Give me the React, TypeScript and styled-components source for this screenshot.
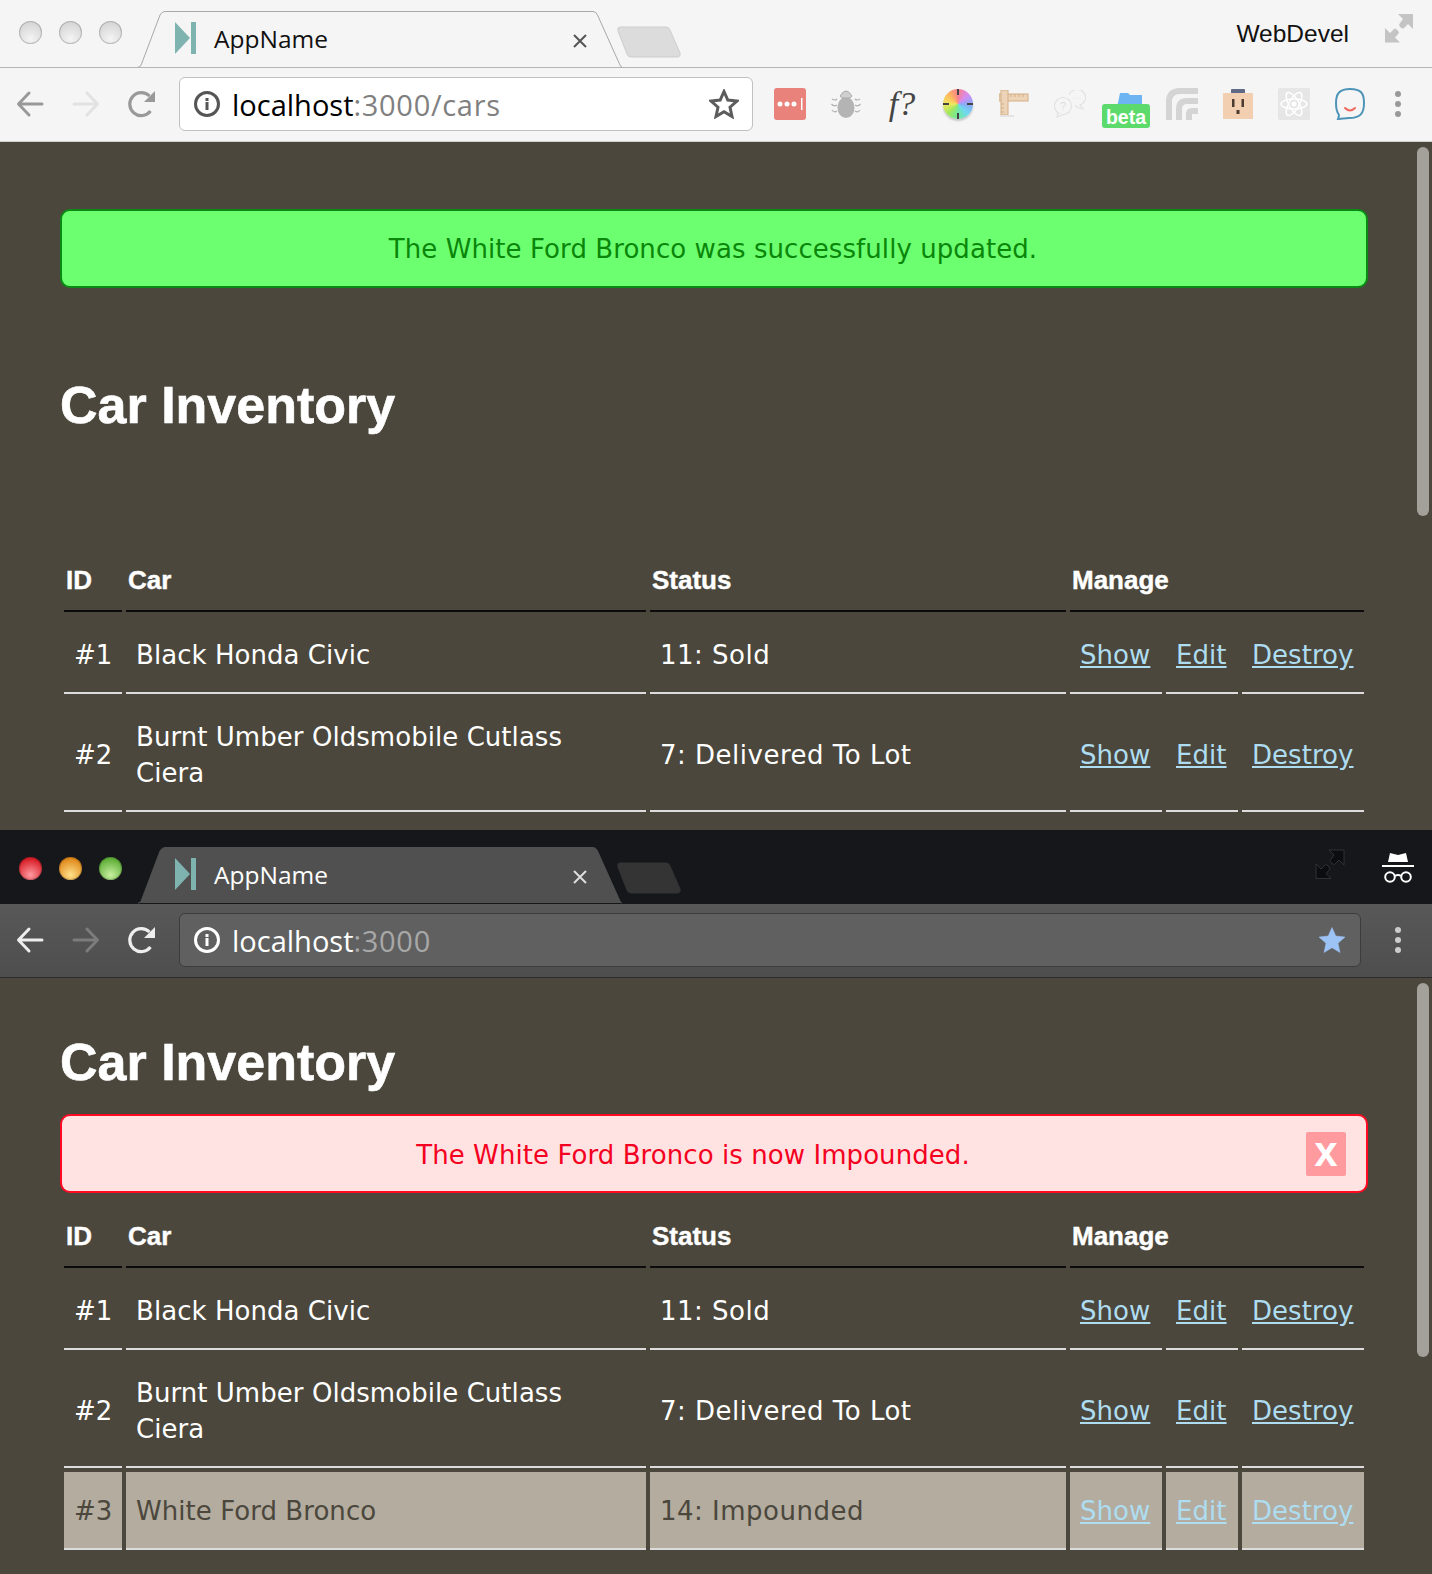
import React from "react";
import styled, { createGlobalStyle } from "styled-components";

const BODY_FONT = `"DejaVu Sans", Verdana, sans-serif`;
const CHROME_FONT = `"Open Sans", "DejaVu Sans", sans-serif`;
const HEAD_FONT = `"Liberation Sans", Arial, sans-serif`;

const Global = createGlobalStyle`
  html, body {
    margin: 0;
    padding: 0;
    background: #4b473c;
  }
  * {
    box-sizing: border-box;
  }
`;

const Page = styled.div`
  width: 1432px;
  height: 1574px;
  overflow: hidden;
`;

const Window = styled.section<{ $height: number }>`
  position: relative;
  height: ${(p) => p.$height}px;
  overflow: hidden;
  background: #4b473c;
`;

const Strip = styled.div<{ $dark?: boolean }>`
  display: flex;
  align-items: flex-end;
  height: ${(p) => (p.$dark ? 74 : 68)}px;
  background: ${(p) => (p.$dark ? "#15171a" : "#f5f5f5")};
  border-bottom: 1px solid ${(p) => (p.$dark ? "#15171a" : "#b4b4b4")};
`;

const Lights = styled.div`
  display: flex;
  gap: 17px;
  width: 138px;
  padding-left: 19px;
  margin-bottom: 23px;
`;

const Light = styled.span<{ $top: string; $bottom: string }>`
  width: 23px;
  height: 23px;
  border-radius: 50%;
  background: radial-gradient(
    circle at 50% 78%,
    ${(p) => p.$bottom} 0%,
    ${(p) => p.$top} 75%
  );
  box-shadow: inset 0 0 0 1px rgba(0, 0, 0, 0.18);
`;

const Tab = styled.div`
  position: relative;
  display: flex;
  align-items: center;
  width: 484px;
  height: 57px;
  margin-bottom: -1px;
  padding: 0 0 2px 37px;
`;

const TabShape = styled.svg`
  position: absolute;
  left: 0;
  top: 0;
`;

const Favicon = styled.svg`
  position: relative;
  flex: none;
  margin-bottom: 2px;
`;

const TabTitle = styled.span<{ $dark?: boolean }>`
  position: relative;
  margin-left: 18px;
  font: 24.5px ${CHROME_FONT};
  color: ${(p) => (p.$dark ? "#fff" : "#111")};
`;

const TabClose = styled.svg`
  position: absolute;
  left: 434px;
  top: 22px;
`;

const NewTab = styled.svg`
  margin: 0 0 9px -6px;
`;

const Profile = styled.span`
  margin-left: auto;
  margin-bottom: 19px;
  font: 24.5px ${HEAD_FONT};
  color: #111;
`;

const Resize = styled.svg<{ $first?: boolean }>`
  margin-left: ${(p) => (p.$first ? "auto" : "35px")};
  margin-bottom: 24px;
  margin-right: 18px;
`;

const Incognito = styled.svg`
  margin: 0 18px 20px 19px;
`;

const Toolbar = styled.div<{ $dark?: boolean }>`
  display: flex;
  align-items: center;
  height: 74px;
  padding-left: 2px;
  padding-bottom: 1px;
  background: ${(p) =>
    p.$dark ? "linear-gradient(#585858, #4e4e4e)" : "#f5f5f5"};
  border-bottom: 1px solid ${(p) => (p.$dark ? "#2c2c2c" : "#cfcfcf")};
`;

const NavButton = styled.button<{ $color: string }>`
  display: flex;
  align-items: center;
  justify-content: center;
  width: 56px;
  height: 40px;
  padding: 0;
  border: 0;
  background: none;
  color: ${(p) => p.$color};
`;

const UrlBar = styled.div<{ $dark?: boolean; $width: number }>`
  display: flex;
  align-items: center;
  width: ${(p) => p.$width}px;
  height: 54px;
  margin-left: 9px;
  padding: 0 13px 0 14px;
  border: 1px solid ${(p) => (p.$dark ? "#3c3c3c" : "#c0c0c0")};
  border-radius: 6px;
  background: ${(p) => (p.$dark ? "#606060" : "#fff")};
  color: ${(p) => (p.$dark ? "#fff" : "#555")};
`;

const UrlText = styled.span<{ $dark?: boolean }>`
  flex: 1;
  margin-left: 12px;
  font: 29px ${CHROME_FONT};
  color: ${(p) => (p.$dark ? "#fff" : "#000")};
`;

const UrlRest = styled.span<{ $dark?: boolean }>`
  letter-spacing: 0.7px;
  color: ${(p) => (p.$dark ? "#a8a8a8" : "#808080")};
`;

const Extensions = styled.div`
  display: flex;
  margin-left: 9px;
`;

const Extension = styled.div`
  position: relative;
  display: flex;
  align-items: center;
  justify-content: center;
  width: 56px;
  height: 40px;
`;

const FxGlyph = styled.span`
  font: italic 34px "Liberation Serif", serif;
  color: #444;
`;

const Wheel = styled.span`
  position: relative;
  width: 30px;
  height: 30px;
  border-radius: 50%;
  background: conic-gradient(
    #f8808c,
    #d88cf0,
    #8ca8f8,
    #70d8f0,
    #70e8a0,
    #a0e860,
    #f0e860,
    #ffb860,
    #f8808c
  );
  box-shadow: 0 2px 2px rgba(0, 0, 0, 0.2);
`;

const WheelCross = styled.svg`
  position: absolute;
  left: -1px;
  top: -1px;
`;

const Beta = styled.span`
  position: absolute;
  left: 4px;
  top: 20px;
  width: 48px;
  height: 24px;
  padding-top: 1px;
  border-radius: 3px;
  background: #5cdb6c;
  color: #fff;
  font: bold 19.5px/24px ${HEAD_FONT};
  text-align: center;
`;

const FolderIcon = styled.svg`
  position: absolute;
  left: 19px;
  top: 8px;
`;

const Menu = styled.div<{ $color: string }>`
  display: flex;
  flex-direction: column;
  align-items: center;
  gap: 4px;
  width: 40px;
  margin-left: auto;
  margin-right: 14px;
  span {
    width: 6px;
    height: 6px;
    border-radius: 50%;
    background: ${(p) => p.$color};
  }
`;

const Content = styled.main<{ $top: number }>`
  padding: ${(p) => p.$top}px 60px 0;
`;

const Heading = styled.h1<{ $after: number; $before?: number }>`
  margin: ${(p) => p.$before ?? 0}px 0 ${(p) => p.$after}px;
  font: bold 52px/60px ${HEAD_FONT};
  -webkit-text-stroke: 0.6px #fff;
  color: #fff;
`;

const Alert = styled.div<{ $tone: "good" | "bad" }>`
  display: flex;
  align-items: center;
  width: 1308px;
  height: 79px;
  padding: 0 20px 0 18px;
  border: 2px solid ${(p) => (p.$tone === "good" ? "#0a8a14" : "#ff0a22")};
  border-radius: 10px;
  background: ${(p) => (p.$tone === "good" ? "#6cff70" : "#ffe3e3")};
  color: ${(p) => (p.$tone === "good" ? "#0a860a" : "#f40020")};
  font: 26px ${BODY_FONT};
  letter-spacing: 0.07px;
`;

const AlertText = styled.span<{ $nudge?: boolean }>`
  flex: 1;
  padding-top: ${(p) => (p.$nudge ? 2 : 0)}px;
  text-align: center;
`;

const AlertClose = styled.button`
  width: 40px;
  height: 44px;
  padding: 0 0 6px;
  border: 0;
  border-radius: 2px;
  background: #ff9a9e;
  color: #fff;
  font: bold 42px/40px ${HEAD_FONT};
`;

const Table = styled.table`
  width: 1308px;
  margin-top: 16px;
  table-layout: fixed;
  border-collapse: separate;
  border-spacing: 4px;
  color: #fff;
`;

const HeadCell = styled.th`
  padding: 5px 2px 12px;
  border-bottom: 2px solid #0c0c0c;
  font: bold 26px/36px ${HEAD_FONT};
  -webkit-text-stroke: 0.4px #fff;
  text-align: left;
`;

const Cell = styled.td<{ $muted?: boolean; $center?: boolean; $wide?: boolean }>`
  padding: 21px 10px 19px;
  border-bottom: 2px solid #dcdcdc;
  background: ${(p) => (p.$muted ? "#b3ac9f" : "transparent")};
  color: ${(p) => (p.$muted ? "#4b473c" : "#fff")};
  font: 26px/36px ${BODY_FONT};
  letter-spacing: ${(p) => (p.$wide ? 0.5 : 0.05)}px;
  text-align: ${(p) => (p.$center ? "center" : "left")};
  white-space: normal;
`;

const ActionLink = styled.a`
  color: #aedcf0;
  text-decoration: underline;
`;

const Scrollbar = styled.div<{ $top: number; $height: number }>`
  position: absolute;
  right: 3px;
  top: ${(p) => p.$top}px;
  width: 12px;
  height: ${(p) => p.$height}px;
  border-radius: 6px;
  background: #a3a199;
`;

const COLUMNS = [58, 520, 416, 92, 72, 122];

const CARS = [
  { id: "#1", name: "Black Honda Civic", status: "11: Sold" },
  { id: "#2", name: "Burnt Umber Oldsmobile Cutlass Ciera", status: "7: Delivered To Lot" },
  { id: "#3", name: "White Ford Bronco", status: "14: Impounded", muted: true },
];

const Inventory = ({ rows }: { rows: typeof CARS }) => (
  <Table>
    <colgroup>
      {COLUMNS.map((w, i) => (
        <col key={i} width={w} />
      ))}
    </colgroup>
    <thead>
      <tr>
        <HeadCell>ID</HeadCell>
        <HeadCell>Car</HeadCell>
        <HeadCell>Status</HeadCell>
        <HeadCell colSpan={3}>Manage</HeadCell>
      </tr>
    </thead>
    <tbody>
      {rows.map((car) => (
        <tr key={car.id}>
          <Cell $muted={car.muted} $center>{car.id}</Cell>
          <Cell $muted={car.muted}>{car.name}</Cell>
          <Cell $muted={car.muted} $wide>{car.status}</Cell>
          <Cell $muted={car.muted}><ActionLink href="#show">Show</ActionLink></Cell>
          <Cell $muted={car.muted}><ActionLink href="#edit">Edit</ActionLink></Cell>
          <Cell $muted={car.muted}><ActionLink href="#destroy">Destroy</ActionLink></Cell>
        </tr>
      ))}
    </tbody>
  </Table>
);

const BrowserTab = ({ dark }: { dark?: boolean }) => (
  <Tab>
    <TabShape width="484" height="57" viewBox="0 0 484 57">
      <path
        d="M0 56 H1 Q2.500 56 3.500 53 L22 4 Q24 0.5 27 0.5 H455 Q458 0.5 459.500 4 L481.500 53 Q482.500 56 484 56"
        fill={dark ? "#505050" : "#f5f5f5"}
        stroke={dark ? "#505050" : "#a8a8a8"}
      />
    </TabShape>
    <Favicon width="21" height="32" viewBox="0 0 21 32">
      <path d="M0 0 L15 16 L0 32 Z" fill="#7fb3b0" />
      <rect x="16" y="0" width="5" height="32" fill="#7fb3b0" />
    </Favicon>
    <TabTitle $dark={dark}>AppName</TabTitle>
    <TabClose width="16" height="16" viewBox="0 0 16 16">
      <path
        d="M2 2 L14 14 M14 2 L2 14"
        stroke={dark ? "#ddd" : "#555"}
        strokeWidth="2"
      />
    </TabClose>
  </Tab>
);

const NewTabShape = ({ dark }: { dark?: boolean }) => (
  <NewTab width="66" height="32" viewBox="0 0 66 32">
    <path
      d="M4 1 H50 Q53 1 54 4 L64 27 Q65 31 61 31 H15 Q12 31 11 28 L2 5 Q1 1 4 1 Z"
      fill={dark ? "#343434" : "#dcdcdc"}
      stroke={dark ? "#343434" : "#cdcdcd"}
    />
  </NewTab>
);

const ResizeArrows = ({ dark, first }: { dark?: boolean; first?: boolean }) => (
  <Resize $first={first} width="30" height="30" viewBox="0 0 30 30">
    <path
      d="M14 1 H29 V16 L24 11 L19.500 15.500 Q16 15.500 15 11.500 L19 6 Z M1 15 V29.500 H16 L11 24.500 L15 20 Q14 16 10.500 15.500 L6 20 Z"
      fill={dark ? "#0c0d0f" : "#c4c4c4"}
      stroke={dark ? "#303236" : "none"}
      strokeWidth="1"
    />
  </Resize>
);

const BackIcon = () => (
  <svg width="28" height="28" viewBox="0 0 28 28" fill="none" stroke="currentColor" strokeWidth="3" strokeLinecap="round" strokeLinejoin="round">
    <path d="M26 14 H3 M13 3 L2.500 14 L13 25" />
  </svg>
);

const ForwardIcon = () => (
  <svg width="28" height="28" viewBox="0 0 28 28" fill="none" stroke="currentColor" strokeWidth="3" strokeLinecap="round" strokeLinejoin="round">
    <path d="M2 14 H25 M15 3 L25.500 14 L15 25" />
  </svg>
);

const ReloadIcon = () => (
  <svg width="28" height="28" viewBox="0 0 28 28" fill="none">
    <path d="M22.500 21 A11.500 11.500 0 1 1 21.500 6" stroke="currentColor" strokeWidth="3.200" />
    <path d="M27 1 V12 H16 Z" fill="currentColor" />
  </svg>
);

const InfoIcon = () => (
  <svg width="26" height="26" viewBox="0 0 26 26" fill="none" style={{ flex: "none" }}>
    <circle cx="13" cy="13" r="11.500" stroke="currentColor" strokeWidth="3" />
    <rect x="11.500" y="11" width="3" height="8" fill="currentColor" />
    <rect x="11.500" y="7" width="3" height="3" fill="currentColor" />
  </svg>
);

const StarIcon = ({ filled }: { filled?: boolean }) => (
  <svg width="30" height="30" viewBox="0 0 30 30" style={{ flex: "none" }}>
    <path
      d="M15 2.500 L18.800 11 L28 12 L21 18.200 L23 27.500 L15 22.700 L7 27.500 L9 18.200 L2 12 L11.200 11 Z"
      fill={filled ? "#9dc3f5" : "none"}
      stroke={filled ? "#9dc3f5" : "#5c5c5c"}
      strokeWidth={filled ? 0.5 : 3}
      strokeLinejoin="miter"
    />
  </svg>
);

const LastPassIcon = () => (
  <svg width="32" height="32" viewBox="0 0 32 32">
    <rect width="32" height="32" rx="3" fill="#e8827b" />
    <circle cx="6" cy="16" r="2.500" fill="#fff" />
    <circle cx="13" cy="16" r="2.500" fill="#fff" />
    <circle cx="20" cy="16" r="2.500" fill="#fff" />
    <rect x="27" y="10" width="1.500" height="12" fill="#fff" />
  </svg>
);

const BugIcon = () => (
  <svg width="30" height="30" viewBox="0 0 30 30" fill="none">
    <ellipse cx="15" cy="18.500" rx="8.500" ry="10.500" fill="#b4b4b4" />
    <path d="M9 7 Q15 -3 21 7 L19 9 H11 Z" fill="#cfcfcf" stroke="#aaa" />
    <path d="M6 10 Q4 12 1 10 M6 16 Q3 18 0.500 15 M6 22 Q3 24 1 21 M24 10 Q26 12 29 10 M24 16 Q27 18 29.500 15 M24 22 Q27 24 29 21" stroke="#b0b0b0" strokeWidth="1.200" />
  </svg>
);

const RulerIcon = () => (
  <svg width="30" height="28" viewBox="0 0 30 28">
    <rect x="0" y="4" width="29" height="7" fill="#edd4b8" stroke="#d4ae84" />
    <rect x="2" y="0" width="7" height="25" fill="#edd4b8" stroke="#d4ae84" />
    <path d="M12 4 V7 M16 4 V7 M20 4 V7 M24 4 V7 M2 14 H5 M2 18 H5 M2 22 H5" stroke="#d4ae84" />
    <rect x="1" y="25" width="14" height="2" fill="#e4e4e4" />
  </svg>
);

const ChatIcon = () => (
  <svg width="32" height="28" viewBox="0 0 32 28" fill="none" stroke="#e2e2e2" strokeWidth="1.200">
    <path d="M15 5 A8.500 8 0 1 1 26 15 L29 19 Q23 18 21 15" />
    <path d="M18 8 H18.800 M21 8 H21.800 M24 8 H24.800" />
    <circle cx="9" cy="16" r="8.500" fill="#f5f5f5" />
    <path d="M4 23 L3 27 L9 25" fill="#f5f5f5" />
    <text x="6" y="20" fontSize="11" fill="#ddd" stroke="none" fontFamily="Liberation Sans">?</text>
  </svg>
);

const FolderGlyph = () => (
  <FolderIcon width="26" height="16" viewBox="0 0 26 16">
    <path d="M3 1 H11 L13 3 H25 V16 H0 Z" fill="#6db4f2" />
  </FolderIcon>
);

const ArcsIcon = () => (
  <svg width="32" height="32" viewBox="0 0 32 32" fill="none">
    <path d="M3 32 V14 Q3 3 14 3 H32" stroke="#d4d4d4" strokeWidth="6" />
    <path d="M13 32 V21 Q13 13 21 13 H32" stroke="#d4d4d4" strokeWidth="6" />
    <path d="M23 32 V26 Q23 23 26 23 H32" stroke="#d4d4d4" strokeWidth="6" />
  </svg>
);

const OutletIcon = () => (
  <svg width="30" height="30" viewBox="0 0 30 30">
    <rect x="8" y="0" width="14" height="5" rx="1" fill="#606a86" />
    <rect x="0" y="4" width="30" height="26" fill="#f2cfb0" />
    <rect x="9" y="10" width="2.500" height="8" fill="#4c3a30" />
    <rect x="18.500" y="10" width="2.500" height="8" fill="#4c3a30" />
    <rect x="13.500" y="21" width="3" height="4" fill="#4c3a30" />
  </svg>
);

const ReactIcon = () => (
  <svg width="32" height="32" viewBox="0 0 32 32" fill="none">
    <rect width="32" height="32" rx="2" fill="#e6e6e6" />
    <g stroke="#fff" strokeWidth="1.500">
      <ellipse cx="16" cy="16" rx="13" ry="5" />
      <ellipse cx="16" cy="16" rx="13" ry="5" transform="rotate(60 16 16)" />
      <ellipse cx="16" cy="16" rx="13" ry="5" transform="rotate(120 16 16)" />
    </g>
    <circle cx="16" cy="16" r="2.500" fill="#fff" />
  </svg>
);

const SpeechIcon = () => (
  <svg width="32" height="32" viewBox="0 0 32 32" fill="none">
    <path
      d="M16 1 C27 1 30 5 30 15 C30 26 26 30 15 30 L4 31 Q5 28 5 27 C2 23 2 19 2 15 C2 5 6 1 16 1 Z"
      stroke="#4d94b8"
      strokeWidth="2"
    />
    <path d="M11 20 Q16 25 21 20" stroke="#ee6a5e" strokeWidth="2" strokeLinecap="round" />
  </svg>
);

const IncognitoIcon = () => (
  <Incognito width="32" height="30" viewBox="0 0 32 30" fill="none">
    <path d="M8 0 L16 2 L24 0 L26 9 H6 Z" fill="#fff" />
    <rect x="0" y="12" width="32" height="2" fill="#fff" />
    <circle cx="8" cy="24" r="4.800" stroke="#fff" strokeWidth="2" />
    <circle cx="24" cy="24" r="4.800" stroke="#fff" strokeWidth="2" />
    <path d="M13 23 Q16 21 19 23" stroke="#fff" strokeWidth="2" />
  </Incognito>
);

const NavButtons = ({ dark }: { dark?: boolean }) => (
  <>
    <NavButton $color={dark ? "#eee" : "#999"} aria-label="Back"><BackIcon /></NavButton>
    <NavButton $color={dark ? "#7c7c7c" : "#e2e2e2"} aria-label="Forward"><ForwardIcon /></NavButton>
    <NavButton $color={dark ? "#eee" : "#999"} aria-label="Reload"><ReloadIcon /></NavButton>
  </>
);

export default function App() {
  return (
    <Page>
      <Global />
      <Window $height={830}>
        <Strip>
          <Lights>
            <Light $top="#d6d6d6" $bottom="#f4f4f4" />
            <Light $top="#d6d6d6" $bottom="#f4f4f4" />
            <Light $top="#d6d6d6" $bottom="#f4f4f4" />
          </Lights>
          <BrowserTab />
          <NewTabShape />
          <Profile>WebDevel</Profile>
          <ResizeArrows />
        </Strip>
        <Toolbar>
          <NavButtons />
          <UrlBar $width={574}>
            <InfoIcon />
            <UrlText>localhost<UrlRest>:3000/cars</UrlRest></UrlText>
            <StarIcon />
          </UrlBar>
          <Extensions>
            <Extension><LastPassIcon /></Extension>
            <Extension><BugIcon /></Extension>
            <Extension><FxGlyph>f?</FxGlyph></Extension>
            <Extension>
              <Wheel>
                <WheelCross width="32" height="32" viewBox="0 0 32 32">
                  <path d="M16 1 V7 M16 25 V31 M1 16 H7 M25 16 H31" stroke="#444" strokeWidth="2" />
                </WheelCross>
              </Wheel>
            </Extension>
            <Extension><RulerIcon /></Extension>
            <Extension><ChatIcon /></Extension>
            <Extension>
              <FolderGlyph />
              <Beta>beta</Beta>
            </Extension>
            <Extension><ArcsIcon /></Extension>
            <Extension><OutletIcon /></Extension>
            <Extension><ReactIcon /></Extension>
            <Extension><SpeechIcon /></Extension>
          </Extensions>
          <Menu $color="#999"><span /><span /><span /></Menu>
        </Toolbar>
        <Content $top={67}>
          <Alert $tone="good">
            <AlertText>The White Ford Bronco was successfully updated.</AlertText>
          </Alert>
          <Heading $before={87} $after={118}>Car Inventory</Heading>
          <Inventory rows={CARS.slice(0, 2)} />
        </Content>
        <Scrollbar $top={147} $height={369} />
      </Window>
      <Window $height={744}>
        <Strip $dark>
          <Lights>
            <Light $top="#d81e28" $bottom="#ff9aa0" />
            <Light $top="#e08a1c" $bottom="#ffe08a" />
            <Light $top="#5fae38" $bottom="#c8f0a0" />
          </Lights>
          <BrowserTab dark />
          <NewTabShape dark />
          <ResizeArrows dark first />
          <IncognitoIcon />
        </Strip>
        <Toolbar $dark>
          <NavButtons dark />
          <UrlBar $dark $width={1182}>
            <InfoIcon />
            <UrlText $dark>localhost<UrlRest $dark>:3000</UrlRest></UrlText>
            <StarIcon filled />
          </UrlBar>
          <Menu $color="#ccc"><span /><span /><span /></Menu>
        </Toolbar>
        <Content $top={54}>
          <Heading $after={22}>Car Inventory</Heading>
          <Alert $tone="bad">
            <AlertText $nudge>The White Ford Bronco is now Impounded.</AlertText>
            <AlertClose aria-label="Dismiss">x</AlertClose>
          </Alert>
          <Inventory rows={CARS} />
        </Content>
        <Scrollbar $top={153} $height={374} />
      </Window>
    </Page>
  );
}
